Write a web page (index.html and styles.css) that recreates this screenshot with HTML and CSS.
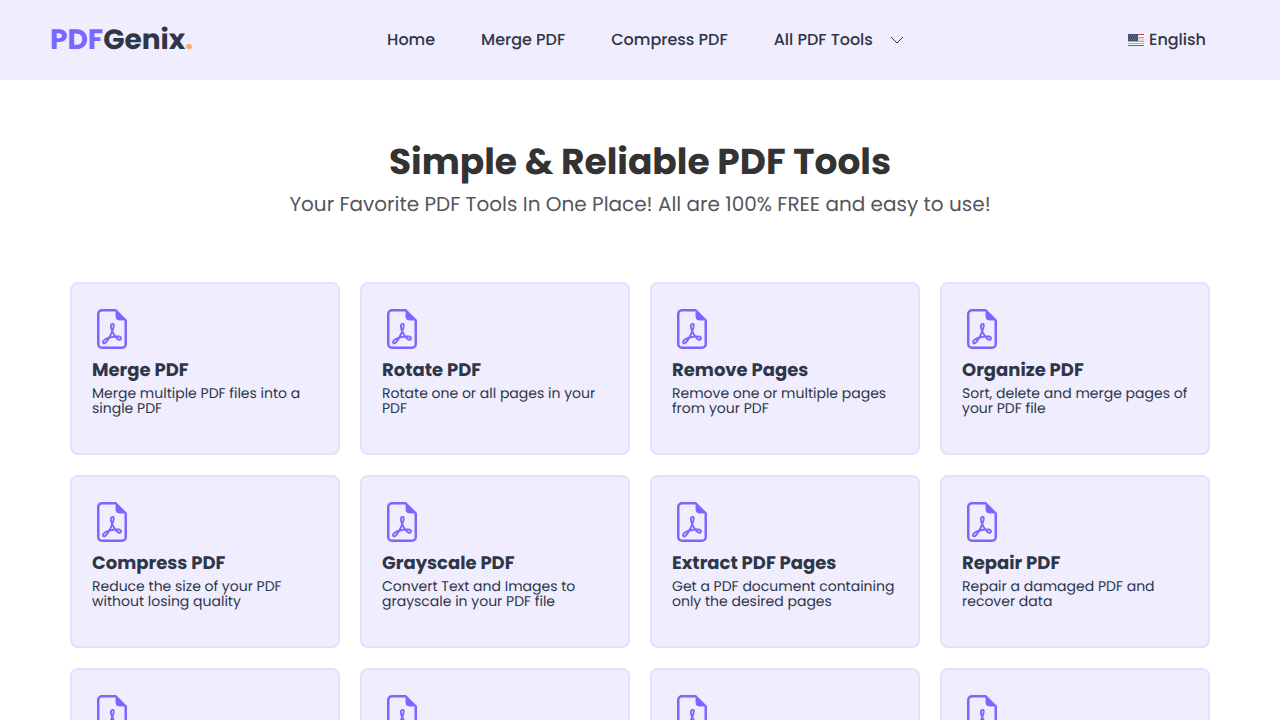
FILE: index.html
```html
<!DOCTYPE html>
<html lang="en">
<head>
    <meta charset="UTF-8">
    <meta name="viewport" content="width=device-width, initial-scale=1.0">
    <title>PDFGenix - Simple &amp; Reliable PDF Tools</title>
    <link rel="stylesheet" href="styles.css">
</head>
<body>
    <svg class="sprite" aria-hidden="true">
        <symbol id="pdf" viewBox="0 0 16 16">
            <path d="M14 14V4.5L9.5 0H4a2 2 0 0 0-2 2v12a2 2 0 0 0 2 2h8a2 2 0 0 0 2-2zM9.5 3A1.5 1.5 0 0 0 11 4.5h2V14a1 1 0 0 1-1 1H4a1 1 0 0 1-1-1V2a1 1 0 0 1 1-1h5.5z"/>
            <path d="M9.5 0v3A1.5 1.5 0 0 0 11 4.5h3z"/>
            <path d="M4.603 14.087a.81.81 0 0 1-.438-.42c-.195-.388-.13-.776.08-1.102.198-.307.526-.568.897-.787a7.68 7.68 0 0 1 1.482-.645 19.697 19.697 0 0 0 1.062-2.227 7.269 7.269 0 0 1-.43-1.295c-.086-.4-.119-.796-.046-1.136.075-.354.274-.672.65-.823.192-.077.4-.12.602-.077a.7.7 0 0 1 .477.365c.088.164.12.356.127.538.007.188-.012.396-.047.614-.084.51-.27 1.134-.52 1.794a10.954 10.954 0 0 0 .98 1.686 5.753 5.753 0 0 1 1.334.05c.364.066.734.195.96.465.12.144.193.32.2.518.007.192-.047.382-.138.563a1.04 1.04 0 0 1-.354.416.856.856 0 0 1-.51.138c-.331-.014-.654-.196-.933-.417a5.712 5.712 0 0 1-.911-.95 11.651 11.651 0 0 0-1.997.406 11.307 11.307 0 0 1-1.02 1.51c-.292.35-.609.656-.927.787a.793.793 0 0 1-.58.029zm1.379-1.901c-.166.076-.32.156-.459.238-.328.194-.541.383-.647.547-.094.145-.096.25-.04.361.01.022.02.036.026.044a.266.266 0 0 0 .035-.012c.137-.056.355-.235.635-.572a8.18 8.18 0 0 0 .45-.606zm1.64-1.33a12.71 12.71 0 0 1 1.01-.193 11.744 11.744 0 0 1-.51-.858 20.801 20.801 0 0 1-.5 1.05zm2.446.45c.15.163.296.3.435.41.24.19.407.253.498.256a.107.107 0 0 0 .07-.015.307.307 0 0 0 .094-.125.436.436 0 0 0 .059-.2.095.095 0 0 0-.026-.063c-.052-.062-.2-.152-.518-.209a3.876 3.876 0 0 0-.612-.053zM8.078 7.8a6.7 6.7 0 0 0 .2-.828c.031-.188.043-.343.038-.465a.613.613 0 0 0-.032-.198.517.517 0 0 0-.145.04c-.087.035-.158.106-.196.283-.04.192-.03.469.046.822.024.111.054.227.09.346z"/>
        </symbol>
    </svg>

    <header class="header">
        <a href="#" class="logo"><span class="logo-pdf">PDF</span>Genix<span class="logo-dot">.</span></a>
        <nav class="nav">
            <a href="#">Home</a>
            <a href="#">Merge PDF</a>
            <a href="#">Compress PDF</a>
            <button type="button" class="nav-tools">All PDF Tools
                <svg class="chevron" viewBox="0 0 14 8"><path d="M1 1l6 6 6-6"/></svg>
            </button>
        </nav>
        <button type="button" class="language">
            <svg class="flag" viewBox="0 0 16 12">
                <path fill="#f8f8f8" d="M0 0h16v12H0z"/>
                <path fill="#d03b48" d="M0 0h16v1H0zM0 11h16v1H0z"/>
                <path fill="#d9d9dc" d="M9 4h7v3H9z"/>
                <path fill="#929297" d="M9 3h7v1H9zM0 7h16v1H0zM0 9h16v1H0z" opacity=".75"/>
                <path fill="#46506b" d="M0 0h10v7H0z"/>
                <path stroke="#69728a" stroke-dasharray="1 1" d="M1 1.5h8M2 3.5h7M1 5.5h8"/>
            </svg>
            English
        </button>
    </header>

    <main class="container">
        <div class="intro">
            <h1>Simple &amp; Reliable PDF Tools</h1>
            <p>Your Favorite PDF Tools In One Place! All are 100% FREE and easy to use!</p>
        </div>
        <div class="tools">
            <a href="#" class="card">
                <svg class="icon"><use href="#pdf"/></svg>
                <h2>Merge PDF</h2>
                <p>Merge multiple PDF files into a single PDF</p>
            </a>
            <a href="#" class="card">
                <svg class="icon"><use href="#pdf"/></svg>
                <h2>Rotate PDF</h2>
                <p>Rotate one or all pages in your PDF</p>
            </a>
            <a href="#" class="card">
                <svg class="icon"><use href="#pdf"/></svg>
                <h2>Remove Pages</h2>
                <p>Remove one or multiple pages from your PDF</p>
            </a>
            <a href="#" class="card">
                <svg class="icon"><use href="#pdf"/></svg>
                <h2>Organize PDF</h2>
                <p>Sort, delete and merge pages of your PDF file</p>
            </a>
            <a href="#" class="card">
                <svg class="icon"><use href="#pdf"/></svg>
                <h2>Compress PDF</h2>
                <p>Reduce the size of your PDF without losing quality</p>
            </a>
            <a href="#" class="card">
                <svg class="icon"><use href="#pdf"/></svg>
                <h2>Grayscale PDF</h2>
                <p>Convert Text and Images to grayscale in your PDF file</p>
            </a>
            <a href="#" class="card">
                <svg class="icon"><use href="#pdf"/></svg>
                <h2>Extract PDF Pages</h2>
                <p>Get a PDF document containing only the desired pages</p>
            </a>
            <a href="#" class="card">
                <svg class="icon"><use href="#pdf"/></svg>
                <h2>Repair PDF</h2>
                <p>Repair a damaged PDF and recover data</p>
            </a>
            <a href="#" class="card"><svg class="icon"><use href="#pdf"/></svg></a>
            <a href="#" class="card"><svg class="icon"><use href="#pdf"/></svg></a>
            <a href="#" class="card"><svg class="icon"><use href="#pdf"/></svg></a>
            <a href="#" class="card"><svg class="icon"><use href="#pdf"/></svg></a>
        </div>
    </main>
</body>
</html>
```
FILE: styles.css
```css
* {
    box-sizing: border-box;
}
body {
    margin: 0;
    font-family: Poppins, Inter, sans-serif;
    text-rendering: geometricPrecision;
    color: #2d3748;
    background: #fff;
}
h1, h2, p {
    margin: 0;
}
a {
    color: inherit;
    text-decoration: none;
}
button {
    font: inherit;
    color: inherit;
    text-rendering: inherit;
    background: none;
    border: none;
    cursor: pointer;
}
.sprite {
    display: none;
}
.header {
    display: grid;
    grid-template-columns: 1fr auto 1fr;
    align-items: center;
    min-height: 80px;
    padding: 0 50px;
    background: #f0edff;
    font-size: 16px;
    font-weight: 500;
    line-height: 24px;
}
.logo {
    font-size: 28px;
    font-weight: 700;
    line-height: 40px;
}
.logo-pdf {
    color: #7c66ff;
}
.logo-dot {
    color: #ffab66;
}
.nav {
    display: flex;
}
.nav a {
    padding: 0 23px;
}
.nav-tools {
    display: flex;
    align-items: center;
    gap: 17px;
    padding: 0 12px 0 23px;
}
.chevron {
    width: 14px;
    height: 8px;
    fill: none;
    stroke: #2d3748;
}
.language {
    display: flex;
    align-items: center;
    justify-self: end;
    gap: 5px;
    padding: 0 24px;
}
.flag {
    width: 16px;
    height: 12px;
}
.container {
    max-width: 1180px;
    margin: 0 auto;
    padding: 60px 20px;
}
.intro {
    text-align: center;
    margin-bottom: 62px;
}
.intro h1 {
    font-size: 36px;
    font-weight: 700;
    line-height: 44px;
    color: #333;
}
.intro p {
    margin-top: 5px;
    font-size: 20px;
    line-height: 31px;
    color: #55565c;
}
.tools {
    display: grid;
    grid-template-columns: repeat(4, 1fr);
    gap: 20px;
}
.card {
    min-height: 173px;
    padding: 25px 20px;
    background: #f0edff;
    border: 2px solid #e4dfff;
    border-radius: 8px;
}
.card:hover {
    border-color: #7c66ff;
}
.icon {
    display: block;
    width: 40px;
    height: 40px;
    fill: #7c66ff;
}
.card h2 {
    margin-top: 11px;
    font-size: 18px;
    font-weight: 700;
    line-height: 22px;
}
.card p {
    margin-top: 4px;
    font-size: 14px;
    line-height: 15px;
}
@media (max-width: 991px) {
    .header {
        display: flex;
        flex-wrap: wrap;
        justify-content: space-between;
    }
    .tools {
        grid-template-columns: repeat(2, 1fr);
    }
}
```
